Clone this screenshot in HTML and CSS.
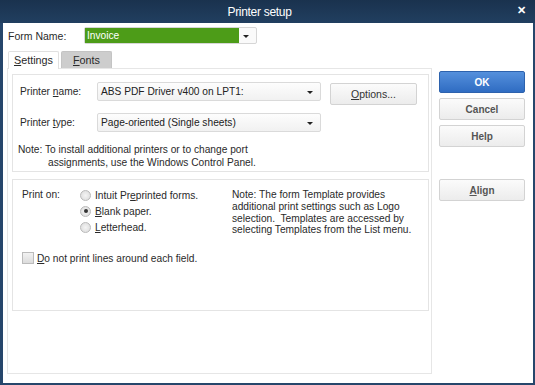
FILE: index.html
```html
<html>
<head>
    <title>Printer setup</title>
    <meta charset="UTF-8">
    <link rel="stylesheet" href="styles.css">
</head>
<body>
<div class="window">
    <div class="titlebar">
        <span class="title">Printer setup</span>
        <span class="close">&#x2715;</span>
    </div>
    <div class="client">
        <div class="left">
            <div class="form-row">
                <span class="form-label">Form Name:</span>
                <div class="combo green">
                    <span class="value">Invoice</span>
                    <span class="drop"><i class="arrow"></i></span>
                </div>
            </div>
            <div class="tabs">
                <div class="tab active"><u>S</u>ettings</div>
                <div class="tab"><u>F</u>onts</div>
            </div>
            <div class="tab-panel">
                <div class="group printer">
                    <div class="field-row">
                        <span class="label">Printer <u>n</u>ame:</span>
                        <div class="select">ABS PDF Driver v400 on LPT1:<i class="arrow"></i></div>
                        <button class="btn options"><u>O</u>ptions...</button>
                    </div>
                    <div class="field-row">
                        <span class="label">Printer <u>t</u>ype:</span>
                        <div class="select">Page-oriented (Single sheets)<i class="arrow"></i></div>
                    </div>
                    <p class="note">Note: To install additional printers or to change port<br>
                        <span class="indent">assignments, use the Windows Control Panel.</span></p>
                </div>
                <div class="group print-on">
                    <div class="print-row">
                        <span class="label-short">Print on:</span>
                        <div class="radios">
                            <label class="radio"><span class="dot"></span>Intuit Pr<u>e</u>printed forms.</label>
                            <label class="radio"><span class="dot on"></span><u>B</u>lank paper.</label>
                            <label class="radio"><span class="dot"></span><u>L</u>etterhead.</label>
                        </div>
                        <p class="side-note">Note: The form Template provides additional print settings such as Logo selection.&nbsp; Templates are accessed by selecting Templates from the List menu.</p>
                    </div>
                    <label class="check"><span class="box"></span><u>D</u>o not print lines around each field.</label>
                </div>
            </div>
        </div>
        <div class="side">
            <button class="btn primary">OK</button>
            <button class="btn">Cancel</button>
            <button class="btn">Help</button>
            <button class="btn align"><u>A</u>lign</button>
        </div>
    </div>
</div>
</body>
</html>
```

FILE: styles.css
```css
body {
    margin:0;
    font-family: "Liberation Sans", Arial, sans-serif;
    font-size:10.2px;
    color:#2a2a2a;
}
.window {
    width:535px;
    height:385px;
    box-sizing:border-box;
    background:#26466b;
    padding:0 2px 2px 3px;
    display:flex;
    flex-direction:column;
}
.titlebar {
    height:23px;
    flex:none;
    background:linear-gradient(#1a324e, #213f60);
    margin:0 -2px 0 -3px;
    display:flex;
    align-items:center;
    justify-content:center;
    position:relative;
    padding-right:16px;
}
.title {
    color:#fff;
    font-size:12px;
    letter-spacing:-0.3px;
}
.close {
    position:absolute;
    right:9px;
    top:4px;
    color:#fff;
    font-size:11px;
    font-weight:bold;
}
.client {
    flex:1;
    background:#fff;
    display:flex;
    padding-left:4px;
}
.left {
    width:425px;
}
.form-row {
    display:flex;
    align-items:center;
    margin-top:4px;
    height:17px;
}
.form-label {
    width:76px;
    padding-left:1px;
    font-size:10.5px;
}
.combo {
    display:flex;
    width:173px;
    height:17px;
    border:1px solid #d6d6d6;
    box-sizing:border-box;
    border-radius:2px;
    background:#fafafa;
}
.combo .value {
    flex:1;
    background:#4d9c18;
    color:#fff;
    padding-left:2px;
    line-height:15px;
}
.combo .drop {
    width:17px;
    position:relative;
}
.arrow {
    position:absolute;
    right:7px;
    top:50%;
    margin-top:-1px;
    border-left:3px solid transparent;
    border-right:3px solid transparent;
    border-top:3px solid #222;
}
.tabs {
    display:flex;
    gap:2px;
    margin-top:6px;
    padding-left:1px;
    height:18px;
    align-items:flex-end;
}
.tab {
    width:51px;
    height:17px;
    box-sizing:border-box;
    border:1px solid #c4c4c4;
    border-bottom:none;
    background:#cdcdcd;
    text-align:center;
    line-height:16px;
    font-size:10.8px;
    border-radius:2px 2px 0 0;
}
.tab.active {
    height:18px;
    background:#fff;
    border-color:#e0e0e0;
    position:relative;
    top:1px;
}
.tab-panel {
    height:306px;
    box-sizing:border-box;
    border:1px solid #e6e6e6;
    padding:5px 2px 0 4px;
}
.group {
    border:1px solid #e4e4e4;
}
.printer {
    height:98px;
    box-sizing:border-box;
    padding:7px 0 0 5px;
}
.field-row {
    display:flex;
    align-items:flex-start;
    height:19px;
    margin-bottom:12px;
}
.label {
    width:79px;
    padding-left:2px;
    box-sizing:border-box;
    line-height:19px;
}
.select {
    position:relative;
    width:224px;
    height:19px;
    box-sizing:border-box;
    border:1px solid #dadada;
    border-radius:2px;
    background:linear-gradient(#fdfdfd, #f1f1f1);
    padding-left:3px;
    line-height:17px;
    color:#222;
}
.btn {
    font-family: "Liberation Sans", Arial, sans-serif;
    font-size:10px;
    font-weight:bold;
    color:#555;
    height:22px;
    width:86px;
    border:1px solid #d3d3d3;
    border-radius:2px;
    background:linear-gradient(#fbfbfb, #ececec);
    padding:0;
}
.options {
    margin-left:9px;
    margin-top:1px;
    width:87px;
    font-weight:normal;
    color:#333;
    font-size:10.5px;
}
.note {
    margin:0;
    line-height:12.5px;
}
.indent {
    padding-left:30px;
}
.print-on {
    margin-top:7px;
    height:132px;
    box-sizing:border-box;
    padding:8px 0 0 9px;
}
.print-row {
    display:flex;
    align-items:flex-start;
}
.label-short {
    width:58px;
    line-height:14px;
}
.radios {
    width:152px;
    display:flex;
    flex-direction:column;
    gap:2px;
}
.radio, .check {
    display:flex;
    align-items:center;
    height:14px;
}
.dot {
    width:11px;
    height:11px;
    box-sizing:border-box;
    border-radius:50%;
    border:1px solid #b9b9b9;
    background:radial-gradient(#f4f4f4, #d9d9d9);
    margin-right:4px;
    position:relative;
}
.dot.on::after {
    content:"";
    position:absolute;
    left:2.5px;
    top:2.5px;
    width:4px;
    height:4px;
    border-radius:50%;
    background:#333;
}
.side-note {
    margin:0;
    width:192px;
    line-height:11.8px;
    padding-top:1px;
}
.check {
    margin-top:15px;
}
.box {
    width:12px;
    height:12px;
    box-sizing:border-box;
    border:1px solid #bbb;
    background:linear-gradient(#f2f2f2, #dcdcdc);
    margin-right:3px;
}
.side {
    margin-left:7px;
    padding-top:48px;
    display:flex;
    flex-direction:column;
    gap:5px;
}
.primary {
    background:linear-gradient(#5590dc, #2f6cc2);
    border-color:#2d62ad;
    color:#fff;
}
.align {
    margin-top:27px;
}
```
